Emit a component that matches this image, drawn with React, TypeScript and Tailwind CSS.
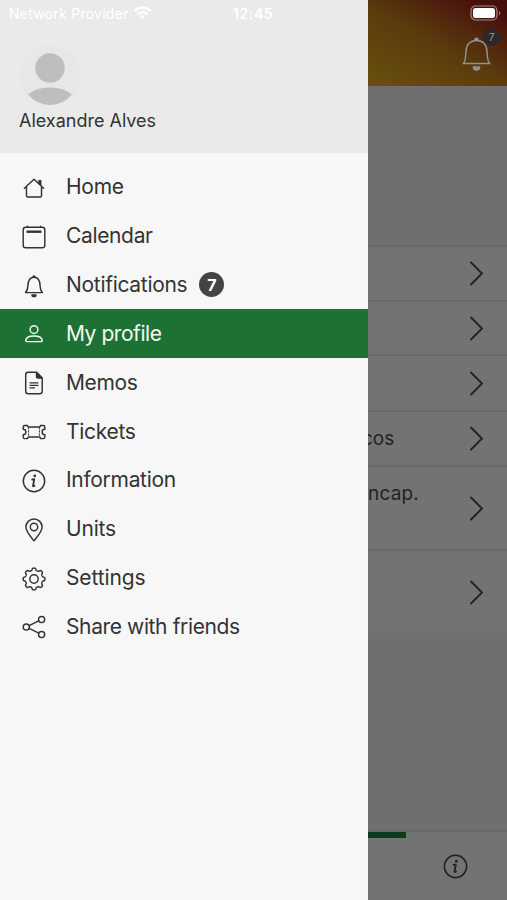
import React from "react";

type IconProps = { children: React.ReactNode; className?: string };

function Icon({ children, className = "" }: IconProps) {
  return (
    <svg
      viewBox="0 0 24 24"
      className={`shrink-0 ${className}`}
      fill="none"
      stroke="currentColor"
      strokeWidth="1.45"
      strokeLinecap="round"
      strokeLinejoin="round"
    >
      {children}
    </svg>
  );
}

// Outline of a cog with eight soft, flat-topped teeth.
const cog = Array.from({ length: 144 }, (_, i) => {
  const angle = (i / 144) * Math.PI * 2;
  const radius = 9.8 + 1.15 * Math.tanh(2 * Math.cos(angle * 8));
  const x = 12 + radius * Math.sin(angle);
  const y = 12 - radius * Math.cos(angle);
  return `${x.toFixed(2)},${y.toFixed(2)}`;
}).join(" ");

const bell = (
  <>
    <path d="M3.5 18.6h17c-1.6-1.5-2.2-3.6-2.4-7-.2-4.8-2-8.4-6.1-8.4s-5.9 3.6-6.1 8.4c-.2 3.4-.8 5.5-2.4 7Z" />
    <path d="M11 2.9a1 1 0 0 1 2 0M10 20.900h4a2 1.600 0 0 1-4 0Z" fill="currentColor" />
  </>
);

const info = (
  <>
    <circle cx="12" cy="12" r="10.700" />
    <circle cx="12.800" cy="6.900" r="1.350" fill="currentColor" stroke="none" />
    <path d="M10.200 10.500l2.100-.3-1.300 6.700q0 .9 1.500-.1" strokeWidth="1.800" />
  </>
);

const items = [
  {
    label: "Home",
    tracking: "tracking-[-0.25px]",
    icon: (
      <>
        <path d="M2.400 12.300 12 3.200l9.600 9.100M4.500 10.600v9.200q0 1.100 1.100 1.100h12.800q1.100 0 1.100-1.100v-9.200" />
        <path d="M17 4.400h2v5.200l-2-1.900Z" fill="currentColor" strokeWidth=".9" />
      </>
    ),
  },
  {
    label: "Calendar",
    tracking: "tracking-[-0.35px]",
    icon: (
      <>
        <rect x="1.200" y="2.200" width="21.600" height="20.600" rx="2.600" />
        <path d="M5.500 1.300v.9M18.500 1.300v.9" />
        <path d="M4.500 6.700h15" strokeWidth="2.400" strokeLinecap="butt" />
      </>
    ),
  },
  { label: "Notifications", tracking: "tracking-[-0.3px]", icon: bell, badge: "7" },
  {
    label: "My profile",
    tracking: "tracking-[-0.45px]",
    active: true,
    icon: (
      <>
        <circle cx="12" cy="7.600" r="3.900" />
        <path d="M3.800 18.400c.2-3.200 3.900-4.500 8.200-4.500s8 1.300 8.200 4.500q0 1.200-1.100 1.200H4.900q-1.100 0-1.100-1.200Z" />
      </>
    ),
  },
  {
    label: "Memos",
    tracking: "tracking-[-0.35px]",
    icon: (
      <>
        <path d="M6.200 1.200h8.300l5.700 5.700v13.300q0 2.500-2.500 2.500H6.200q-2.500 0-2.500-2.500V3.700q0-2.500 2.500-2.500Z" />
        <path d="M14.500 1.400v4.300q0 1.200 1.200 1.200H20Z" fill="currentColor" />
        <path d="M8 11.800h8M8 14.300h8M8 16.800h4.500" strokeWidth="1.200" />
      </>
    ),
  },
  {
    label: "Tickets",
    tracking: "tracking-[-0.3px]",
    icon: (
      <>
        <path d="M2.800 5.400h2.700q0 1.600 1.500 1.600h10q1.500 0 1.500-1.600h2.700q1.600 0 1.600 1.600v2.300a2.700 2.700 0 0 0 0 5.400V17q0 1.600-1.600 1.600h-2.700q0-1.600-1.500-1.600H7q-1.500 0-1.500 1.600H2.800q-1.600 0-1.600-1.600v-2.300a2.700 2.700 0 0 0 0-5.400V7q0-1.600 1.600-1.600Z" />
        <path d="M6.600 7.500v9M17.400 7.500v9" strokeDasharray="1.500 1.700" strokeWidth="1" />
      </>
    ),
  },
  { label: "Information", tracking: "tracking-[-0.3px]", icon: info },
  {
    label: "Units",
    tracking: "tracking-[-0.2px]",
    icon: (
      <>
        <path d="M12 22.800C8.700 18.800 3.900 13.800 3.900 9.100a8.100 8.100 0 0 1 16.200 0c0 4.700-4.800 9.700-8.100 13.700Z" />
        <circle cx="12" cy="9" r="3.700" />
      </>
    ),
  },
  {
    label: "Settings",
    tracking: "tracking-[-0.1px]",
    icon: (
      <>
        <circle cx="12" cy="12" r="4.200" />
        <polygon points={cog} />
      </>
    ),
  },
  {
    label: "Share with friends",
    tracking: "tracking-[-0.38px]",
    icon: (
      <>
        <circle cx="4.300" cy="12" r="3.100" />
        <circle cx="19.600" cy="4.500" r="3.100" />
        <circle cx="19.600" cy="19.500" r="3.100" />
        <path d="m7.100 10.600 9.700-4.700M7.100 13.400l9.700 4.700" />
      </>
    ),
  },
];

const rows = [
  { height: "h-[55px]" },
  { height: "h-[54px]" },
  { height: "h-[56px]" },
  { height: "h-[55px]", text: "cos", className: "-ml-[6px] mt-[2px]" },
  { height: "h-[84px]", text: "ncap.", className: "mb-[27px] tracking-[0.2px]" },
  { height: "h-[84px]" },
];

function Drawer() {
  return (
    <aside className="flex h-full w-[368px] shrink-0 flex-col bg-[#f7f7f7] text-[#333]">
      <header className="h-[153px] bg-[#eaeaea]">
        <div className="flex h-[27px] items-center pl-[9px] text-white">
          <span className="w-[119px] text-[14px] tracking-[0.25px] whitespace-nowrap">Network Provider</span>
          <svg viewBox="0 0 18 13" className="ml-[5px] h-[13px] w-[19px] -translate-y-px" fill="none" stroke="white" strokeWidth="2.600">
            <path d="M1 5q8-7 16 0M3.800 8.300q5.200-4.500 10.400 0" />
            <path d="m6.200 10.300 2.800 2.700 2.800-2.700q-2.800-2-5.600 0Z" fill="white" stroke="none" />
          </svg>
          <span className="ml-[81px] text-[14px] font-semibold tracking-[0.600px]">12:45</span>
        </div>
        <svg viewBox="0 0 60 62" className="mt-[17px] ml-5 h-[62px] w-[60px]">
          <circle cx="30" cy="31" r="30" fill="#e7e7e7" />
          <circle cx="30" cy="24" r="14.700" fill="#bebebe" />
          <path d="M8 50.500Q16 43.500 30 43.500T52 50.500Q43 61 30 61T8 50.500Z" fill="#bebebe" />
        </svg>
        <p className="mt-px ml-[19px] text-[18px] leading-7 whitespace-nowrap">Alexandre Alves</p>
      </header>
      <nav className="pt-[9.500px]">
        {items.map((item) => (
          <div
            key={item.label}
            className={`flex h-[48.840px] items-center pl-[22px] ${item.active ? "bg-[#1e7135] text-[#f1fbf1]" : ""}`}
          >
            <Icon className="size-6 translate-y-px">{item.icon}</Icon>
            <span className={`ml-5 pt-[0.500px] text-[21px] whitespace-nowrap ${item.tracking}`}>{item.label}</span>
            {item.badge && (
              <span className="ml-3 flex size-[25px] items-center justify-center rounded-full bg-[#444] text-[16px] font-bold text-white">
                {item.badge}
              </span>
            )}
          </div>
        ))}
      </nav>
    </aside>
  );
}

export default function App() {
  return (
    <div className="flex h-[900px] w-[507px] overflow-hidden font-['Inter','Liberation_Sans',sans-serif]">
      <Drawer />
      <main className="flex min-w-0 flex-1 flex-col overflow-hidden bg-[#6f6f6f] text-[#222]">
        <header className="relative h-[86px] shrink-0 bg-[linear-gradient(28deg,#69500d_0%,#5a3c0d_48%,#470f0c_90%)]">
          <svg viewBox="0 0 32 16" className="absolute top-[5px] left-[102px] h-4 w-8">
            <rect x="1" y="1" width="26" height="14" rx="4.500" fill="none" stroke="#a7898b" strokeWidth="1.200" />
            <rect x="3" y="3" width="22" height="10" rx="2.500" fill="white" />
            <path d="M29 6q2.500 2 0 4Z" fill="#a7898b" />
          </svg>
          <svg viewBox="0 0 30 34" className="absolute top-[37px] left-[94px] h-[34px] w-[30px]" fill="none" stroke="#919191" strokeWidth="1.500">
            <path d="M1.500 26.500h26c-2-2-2-5-2.500-12C24.600 7.500 21 3.500 14.500 3.500S4.400 7.500 4 14.500c-.5 7-.5 10-2.500 12Z" />
            <path d="M12.800 3a1.700 1.700 0 0 1 3.400 0M11.500 30h6a3 3 0 0 1-6 0Z" fill="#919191" />
          </svg>
          <span className="absolute top-[29px] left-[115px] flex size-[17px] items-center justify-center rounded-full bg-[#292929] text-[10px] text-[#999]">7</span>
        </header>
        <div className="mt-[159px] border-t-2 border-[#696969]">
          {rows.map((row, i) => (
            <div key={i} className={`flex items-center justify-between border-b-2 border-[#696969] bg-[#737373] pr-[23px] last:border-[#6f6f6f] ${row.height}`}>
              <span className={`text-[19px] ${row.className ?? ""}`}>{row.text}</span>
              <svg viewBox="0 0 15 25" className="h-[25px] w-[15px]" fill="none" stroke="currentColor" strokeWidth="1.900">
                <path d="m2 1.500 11 11-11 11" strokeLinecap="round" />
              </svg>
            </div>
          ))}
        </div>
        <footer className="mt-auto h-[70px] border-t-2 border-[#686868] bg-[#737373]">
          <div className="h-[6px] w-[38px] bg-[#0f3b1c]" />
          <Icon className="mt-[16px] ml-[75px] size-[25px]">{info}</Icon>
        </footer>
      </main>
    </div>
  );
}
